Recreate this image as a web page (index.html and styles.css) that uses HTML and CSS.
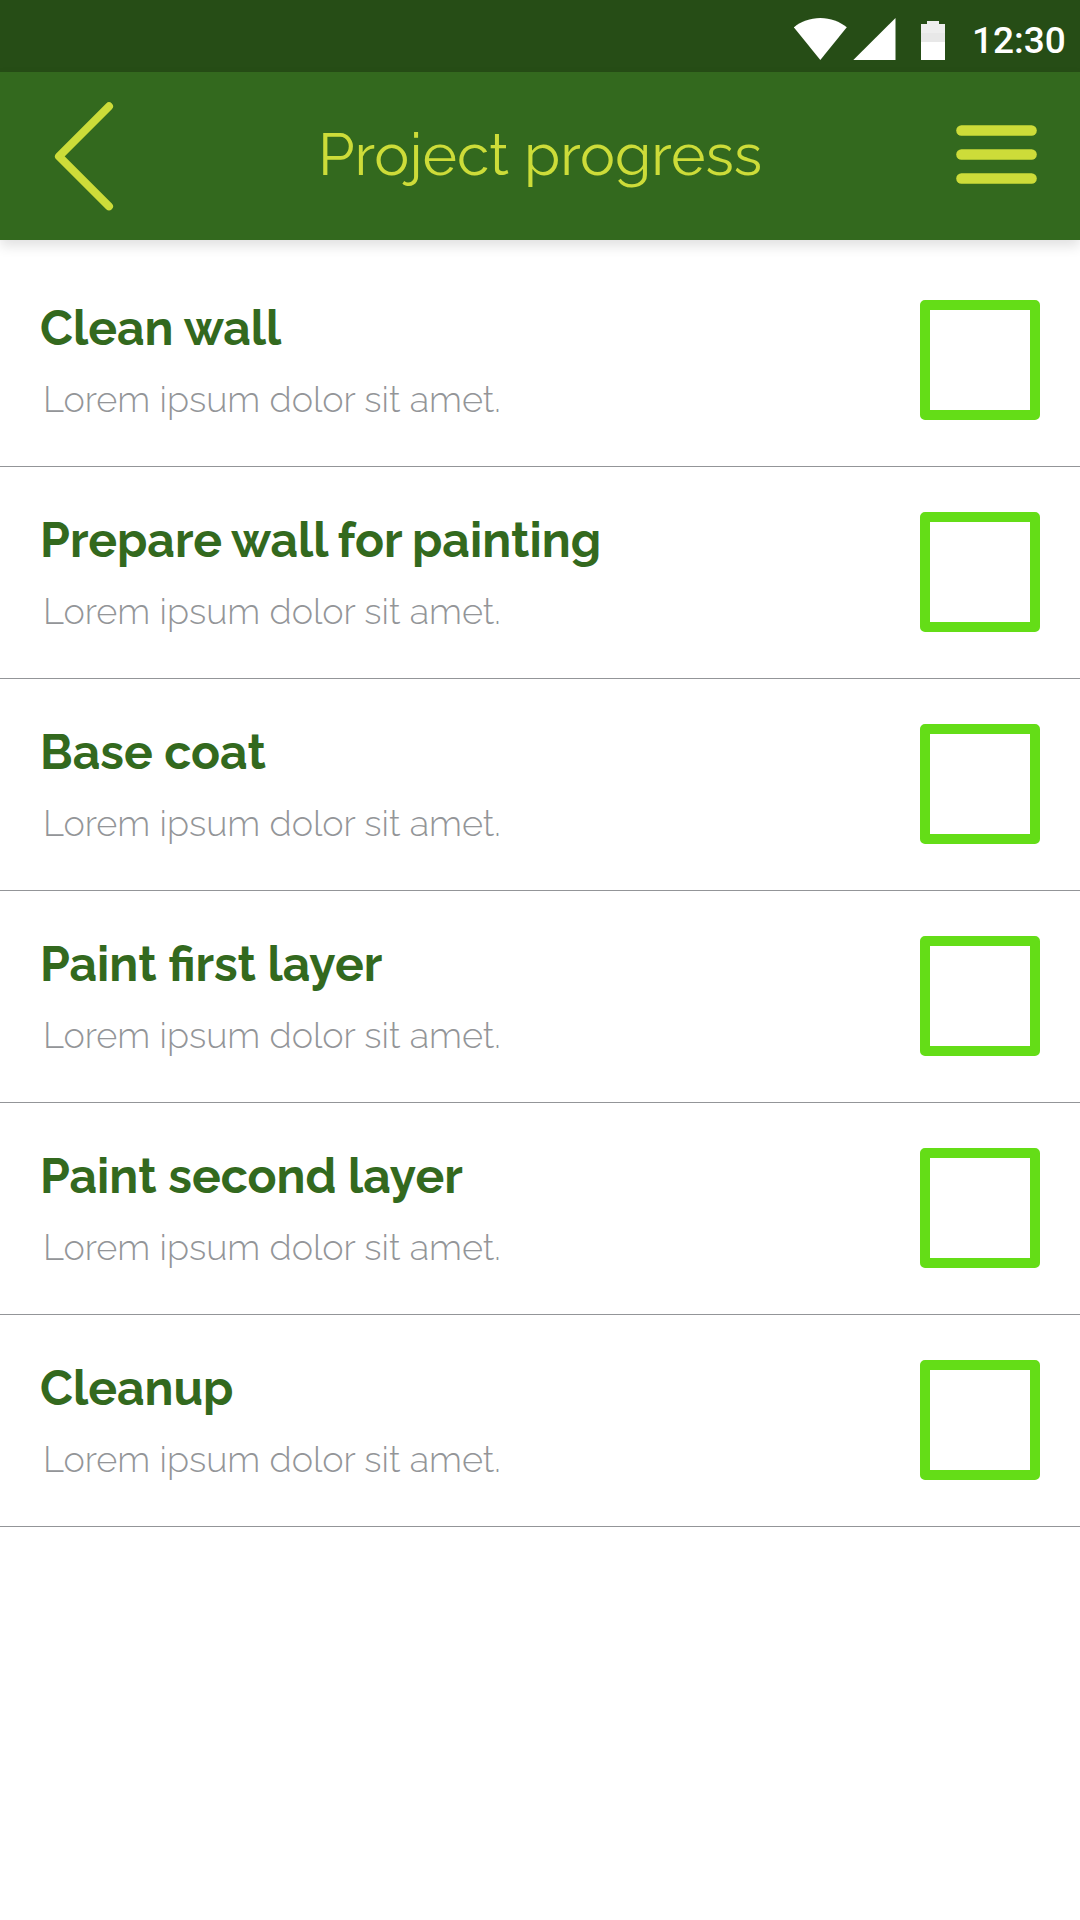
FILE: index.html
```html
<!DOCTYPE html>
<html lang="en">
<head>
<meta charset="utf-8">
<title>Project progress</title>
<link rel="stylesheet" href="styles.css">
</head>
<body>
<div class="status-bar">
  <svg class="status-icons" width="152" height="42" viewBox="794 18 152 42" aria-hidden="true">
    <path fill="#fff" d="M820.3 60 793.8 27.3C801 21.5 810 18 820.3 18s19.3 3.5 26.5 9.3z"/>
    <path fill="#fff" d="M853.3 60 895.5 18v42z"/>
    <path fill="#eee" d="M927 21h12v3h6v9h-24v-9h6z"/>
    <path fill="#e8e8e8" d="M921 33h24v9h-24z"/>
    <path fill="#fff" d="M921 42h24v18h-24z"/>
  </svg>
  <span class="clock">12:30</span>
</div>
<header class="app-bar">
  <svg class="back" width="60" height="112" viewBox="54 100 60 112" role="img" aria-label="Back">
    <path d="M109 106.3 59 156.4 109 206.3" fill="none" stroke="#cddc39" stroke-width="8" stroke-linecap="round" stroke-linejoin="round"/>
  </svg>
  <h1 class="heading">Project progress</h1>
  <svg class="menu" width="82" height="60" viewBox="956 125 82 60" role="img" aria-label="Menu">
    <g fill="#cddc39">
      <rect x="956.2" y="125.2" width="80.6" height="10.6" rx="5.3"/>
      <rect x="956.2" y="149.2" width="80.6" height="10.6" rx="5.3"/>
      <rect x="956.2" y="173.2" width="80.6" height="10.6" rx="5.3"/>
    </g>
  </svg>
</header>
<main class="tasks">
  <section class="task"><div class="text"><h2 class="name">Clean wall</h2><p class="note">Lorem ipsum dolor sit amet.</p></div><span class="box"></span></section>
  <section class="task"><div class="text"><h2 class="name name-long">Prepare wall for painting</h2><p class="note">Lorem ipsum dolor sit amet.</p></div><span class="box"></span></section>
  <section class="task"><div class="text"><h2 class="name">Base coat</h2><p class="note">Lorem ipsum dolor sit amet.</p></div><span class="box"></span></section>
  <section class="task"><div class="text"><h2 class="name">Paint first layer</h2><p class="note">Lorem ipsum dolor sit amet.</p></div><span class="box"></span></section>
  <section class="task"><div class="text"><h2 class="name">Paint second layer</h2><p class="note">Lorem ipsum dolor sit amet.</p></div><span class="box"></span></section>
  <section class="task"><div class="text"><h2 class="name">Cleanup</h2><p class="note">Lorem ipsum dolor sit amet.</p></div><span class="box"></span></section>
</main>
</body>
</html>
```
FILE: styles.css
```css
* { box-sizing: border-box; }

body {
  margin: 0;
  min-height: 1920px;
  background: #fff;
  font-family: Raleway, Lato, sans-serif;
}

.status-bar {
  display: flex;
  align-items: flex-start;
  justify-content: flex-end;
  height: 72px;
  padding: 18px 13px 0 0;
  background: #264d16;
}

.status-icons { display: block; margin-right: 26px; }

.clock {
  width: 95px;
  font: 500 37px/45px Roboto, sans-serif;
  color: #fff;
  white-space: nowrap;
}

.app-bar {
  display: flex;
  align-items: flex-start;
  height: 168px;
  padding: 28px 42px 0 54px;
  background: #33691e;
  box-shadow: 0 6px 12px rgba(0, 0, 0, .12);
}

.back { flex: none; }

.heading {
  flex: 1;
  margin: 19px 0 0 204px;
  font-size: 58.8px;
  font-weight: 400;
  line-height: 72px;
  color: #cddc39;
  white-space: nowrap;
}

.menu { flex: none; margin-top: 25px; }

.tasks { padding-top: 15px; }

.task {
  display: flex;
  justify-content: space-between;
  align-items: flex-start;
  height: 212px;
  padding: 45px 40px 0;
  border-bottom: 1px solid #939598;
}

.text { flex: 1; }

.name {
  margin: 0;
  font-size: 48px;
  font-weight: 700;
  line-height: 56px;
  color: #33691e;
  white-space: nowrap;
}

.name-long { word-spacing: -1.2px; }

.note {
  margin: 21px 0 0 3px;
  font-size: 36px;
  font-weight: 300;
  line-height: 44px;
  color: #939598;
  white-space: nowrap;
}

.box {
  flex: none;
  width: 120px;
  height: 120px;
  border: 10px solid #64dd17;
  border-radius: 5px;
}
```
